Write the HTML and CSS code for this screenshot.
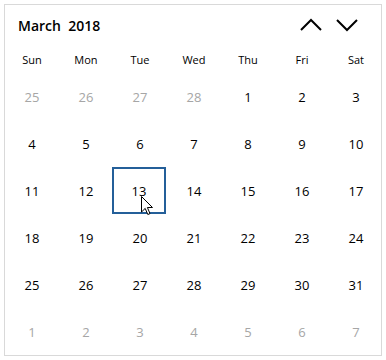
FILE: index.html
```html
<!DOCTYPE html>
<html lang="en">
<head>
    <meta charset="UTF-8">
    <title>Calendar</title>
    <link rel="stylesheet" href="styles.css">
</head>
<body>
    <div class="calendar">
        <!-- Header -->
        <div class="cal-header">
            <div class="cal-title">March&nbsp;&nbsp;2018</div>
            <div class="cal-nav">
                <button class="nav-btn" title="Previous">
                    <svg width="24" height="14" viewBox="0 0 24 14"><path d="M2 12 L12 2 L22 12" fill="none" stroke="#000" stroke-width="2"/></svg>
                </button>
                <button class="nav-btn" title="Next">
                    <svg width="24" height="14" viewBox="0 0 24 14"><path d="M2 2 L12 12 L22 2" fill="none" stroke="#000" stroke-width="2"/></svg>
                </button>
            </div>
        </div>

        <!-- Day names -->
        <div class="cal-grid dow">
            <div>Sun</div><div>Mon</div><div>Tue</div><div>Wed</div><div>Thu</div><div>Fri</div><div>Sat</div>
        </div>

        <!-- Dates -->
        <div class="cal-grid days">
            <div class="day other">25</div><div class="day other">26</div><div class="day other">27</div><div class="day other">28</div><div class="day">1</div><div class="day">2</div><div class="day">3</div>
            <div class="day">4</div><div class="day">5</div><div class="day">6</div><div class="day">7</div><div class="day">8</div><div class="day">9</div><div class="day">10</div>
            <div class="day">11</div><div class="day">12</div>
            <div class="day selected">13
                <svg class="cursor" width="13" height="20" viewBox="0 0 13 20"><path d="M0.5 0.5 L0.5 16 L4.2 12.4 L6.8 18.5 L9 17.6 L6.4 11.5 L11.5 11.5 Z" fill="#fff" stroke="#000" stroke-width="1"/></svg>
            </div>
            <div class="day">14</div><div class="day">15</div><div class="day">16</div><div class="day">17</div>
            <div class="day">18</div><div class="day">19</div><div class="day">20</div><div class="day">21</div><div class="day">22</div><div class="day">23</div><div class="day">24</div>
            <div class="day">25</div><div class="day">26</div><div class="day">27</div><div class="day">28</div><div class="day">29</div><div class="day">30</div><div class="day">31</div>
            <div class="day other">1</div><div class="day other">2</div><div class="day other">3</div><div class="day other">4</div><div class="day other">5</div><div class="day other">6</div><div class="day other">7</div>
        </div>
    </div>
</body>
</html>
```
FILE: styles.css
```css
body {
    margin: 0;
    background: #fff;
    font-family: "Open Sans", "Noto Sans", Arial, sans-serif;
    color: #000;
}

.calendar {
    margin: 4px;
    width: 378px;
    height: 352px;
    box-sizing: border-box;
    border: 1px solid #d9d9d9;
    background: #fff;
}

.cal-header {
    height: 40px;
    display: flex;
    align-items: center;
    justify-content: space-between;
    padding: 0 22px 0 13px;
}

.cal-title {
    font-size: 14px;
    font-weight: 600;
}

.cal-nav {
    display: flex;
    gap: 12px;
}

.nav-btn {
    background: none;
    border: none;
    padding: 0;
    width: 24px;
    height: 14px;
    display: flex;
    cursor: pointer;
}

.cal-grid {
    display: grid;
    grid-template-columns: repeat(7, 54px);
}

.dow div {
    height: 28px;
    display: flex;
    align-items: center;
    justify-content: center;
    font-size: 11px;
}

.day {
    height: 47px;
    display: flex;
    align-items: center;
    justify-content: center;
    font-size: 13px;
    box-sizing: border-box;
}

.day.other {
    color: #a6a6a6;
}

.day.selected {
    position: relative;
    border: 2px solid #245f99;
    margin-left: -1px;
    margin-right: 1px;
}

.cursor {
    position: absolute;
    left: 27px;
    top: 27px;
}
```
